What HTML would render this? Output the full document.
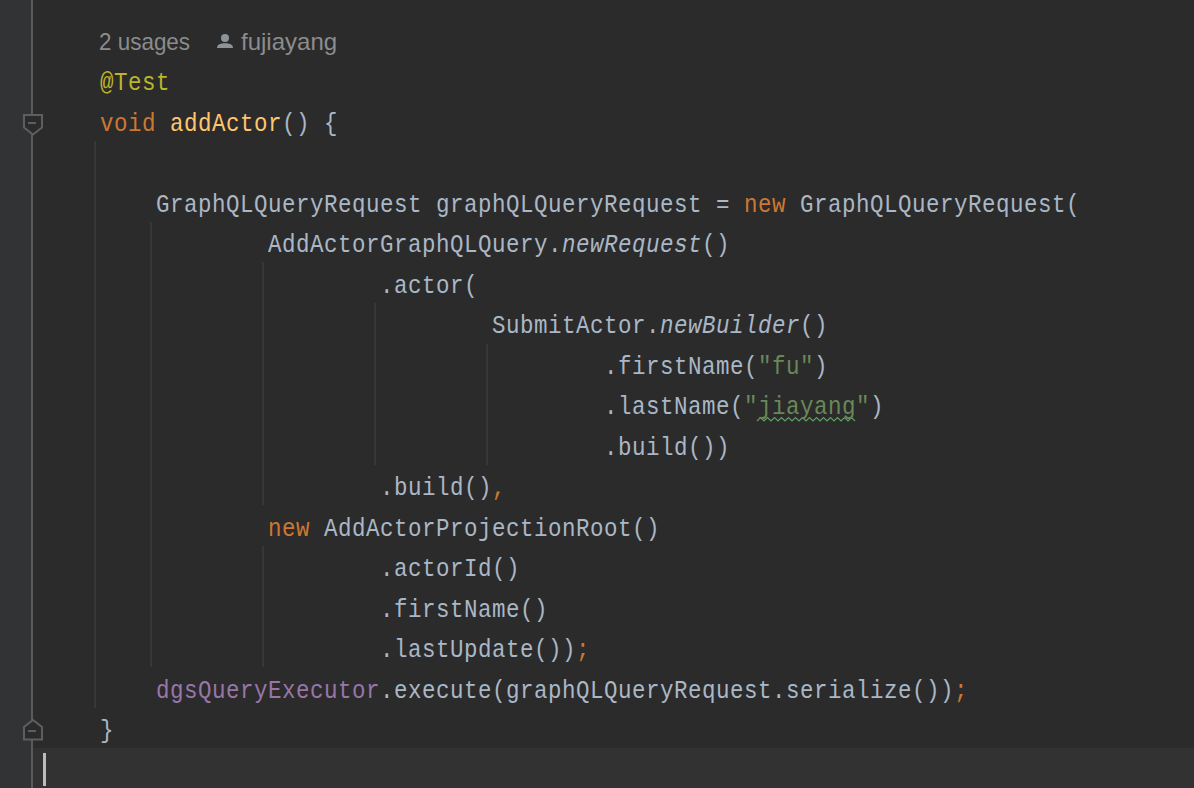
<!DOCTYPE html><html><head><meta charset="utf-8"><style>
html,body{margin:0;padding:0;}
body{width:1194px;height:788px;overflow:hidden;background:#2B2B2B;position:relative;}
.g{position:absolute;left:0;top:0;width:31px;height:788px;background:#313335;}
.gl{position:absolute;left:31px;top:0;width:2px;height:788px;background:#5A5A5A;}
.cl{position:absolute;left:33px;top:748px;width:1161px;height:40px;background:#323232;}
.caret{position:absolute;left:43px;top:753px;width:3px;height:33px;background:#BBBBBB;}
.ig{position:absolute;width:2px;background:#373737;}
.ln{position:absolute;white-space:pre;font-family:"Liberation Mono",monospace;font-size:25px;letter-spacing:0.5532px;color:#A9B7C6;height:40px;line-height:40px;transform:scale(0.9,1.06);transform-origin:0 26.7px;}
.inl{position:absolute;white-space:pre;font-family:"Liberation Sans",sans-serif;font-size:24px;color:#8C8C8C;line-height:40px;}
</style></head><body>
<div class="g"></div><div class="gl"></div><div class="cl"></div><div class="caret"></div>
<svg style="position:absolute;left:0;top:0" width="60" height="788">
<path d="M24 115 H42 V127.5 L33 134.5 L24 127.5 Z" fill="#2B2B2B" stroke="#5E5E5E" stroke-width="2"/>
<rect x="28" y="122" width="8" height="2" fill="#5E5E5E"/>
<path d="M24 739.5 H42 V727 L33 720 L24 727 Z" fill="#2B2B2B" stroke="#5E5E5E" stroke-width="2"/>
<rect x="28" y="730" width="8" height="2" fill="#5E5E5E"/>
</svg>
<svg style="position:absolute;left:0;top:0" width="1194" height="788"><polyline points="757,421 760.5,417.5 764,421 767.5,417.5 771,421 774.5,417.5 778,421 781.5,417.5 785,421 788.5,417.5 792,421 795.5,417.5 799,421 802.5,417.5 806,421 809.5,417.5 813,421 816.5,417.5 820,421 823.5,417.5 827,421 830.5,417.5 834,421 837.5,417.5 841,421 844.5,417.5 848,421 851.5,417.5 855,421" fill="none" stroke="#5F9E62" stroke-width="1.2"/></svg>
<div class="ig" style="left:94px;top:141px;height:567px"></div>
<div class="ig" style="left:150px;top:222px;height:445px"></div>
<div class="ig" style="left:262px;top:262px;height:243px"></div>
<div class="ig" style="left:262px;top:546px;height:121px"></div>
<div class="ig" style="left:374px;top:303px;height:162px"></div>
<div class="ig" style="left:486px;top:344px;height:121px"></div>
<div class="inl" style="left:99px;top:22px;transform:scaleX(0.935);transform-origin:0 0">2 usages</div>
<svg style="position:absolute;left:0;top:0" width="260" height="60"><circle cx="225" cy="38.1" r="4" fill="#8C949A"/><path d="M217 48 C217 44.2 221 43.3 225 43.3 C229 43.3 233 44.2 233 48 Z" fill="#8C949A"/></svg>
<div class="inl" style="left:241px;top:22px">fujiayang</div>
<div class="ln" style="left:99.5px;top:64.3px"><span style="color:#BBB529;">@Test</span></div>
<div class="ln" style="left:99.5px;top:104.8px"><span style="color:#CC7832;">void</span> <span style="color:#FFC66D;">addActor</span>() {</div>
<div class="ln" style="left:155.5px;top:185.8px">GraphQLQueryRequest graphQLQueryRequest = <span style="color:#CC7832;">new</span> GraphQLQueryRequest(</div>
<div class="ln" style="left:267.5px;top:226.3px">AddActorGraphQLQuery.<span style="font-style:italic;">newRequest</span>()</div>
<div class="ln" style="left:379.5px;top:266.8px">.actor(</div>
<div class="ln" style="left:491.5px;top:307.3px">SubmitActor.<span style="font-style:italic;">newBuilder</span>()</div>
<div class="ln" style="left:603.5px;top:347.8px">.firstName(<span style="color:#6A8759;">&quot;fu&quot;</span>)</div>
<div class="ln" style="left:603.5px;top:388.3px">.lastName(<span style="color:#6A8759;">&quot;</span><span class="typo"><span style="color:#6A8759;">jiayang</span></span><span style="color:#6A8759;">&quot;</span>)</div>
<div class="ln" style="left:603.5px;top:428.8px">.build())</div>
<div class="ln" style="left:379.5px;top:469.3px">.build()<span style="color:#CC7832;">,</span></div>
<div class="ln" style="left:267.5px;top:509.8px"><span style="color:#CC7832;">new</span> AddActorProjectionRoot()</div>
<div class="ln" style="left:379.5px;top:550.3px">.actorId()</div>
<div class="ln" style="left:379.5px;top:590.8px">.firstName()</div>
<div class="ln" style="left:379.5px;top:631.3px">.lastUpdate())<span style="color:#CC7832;">;</span></div>
<div class="ln" style="left:155.5px;top:671.8px"><span style="color:#9876AA;">dgsQueryExecutor</span>.execute(graphQLQueryRequest.serialize())<span style="color:#CC7832;">;</span></div>
<div class="ln" style="left:99.5px;top:712.3px">}</div>
</body></html>
